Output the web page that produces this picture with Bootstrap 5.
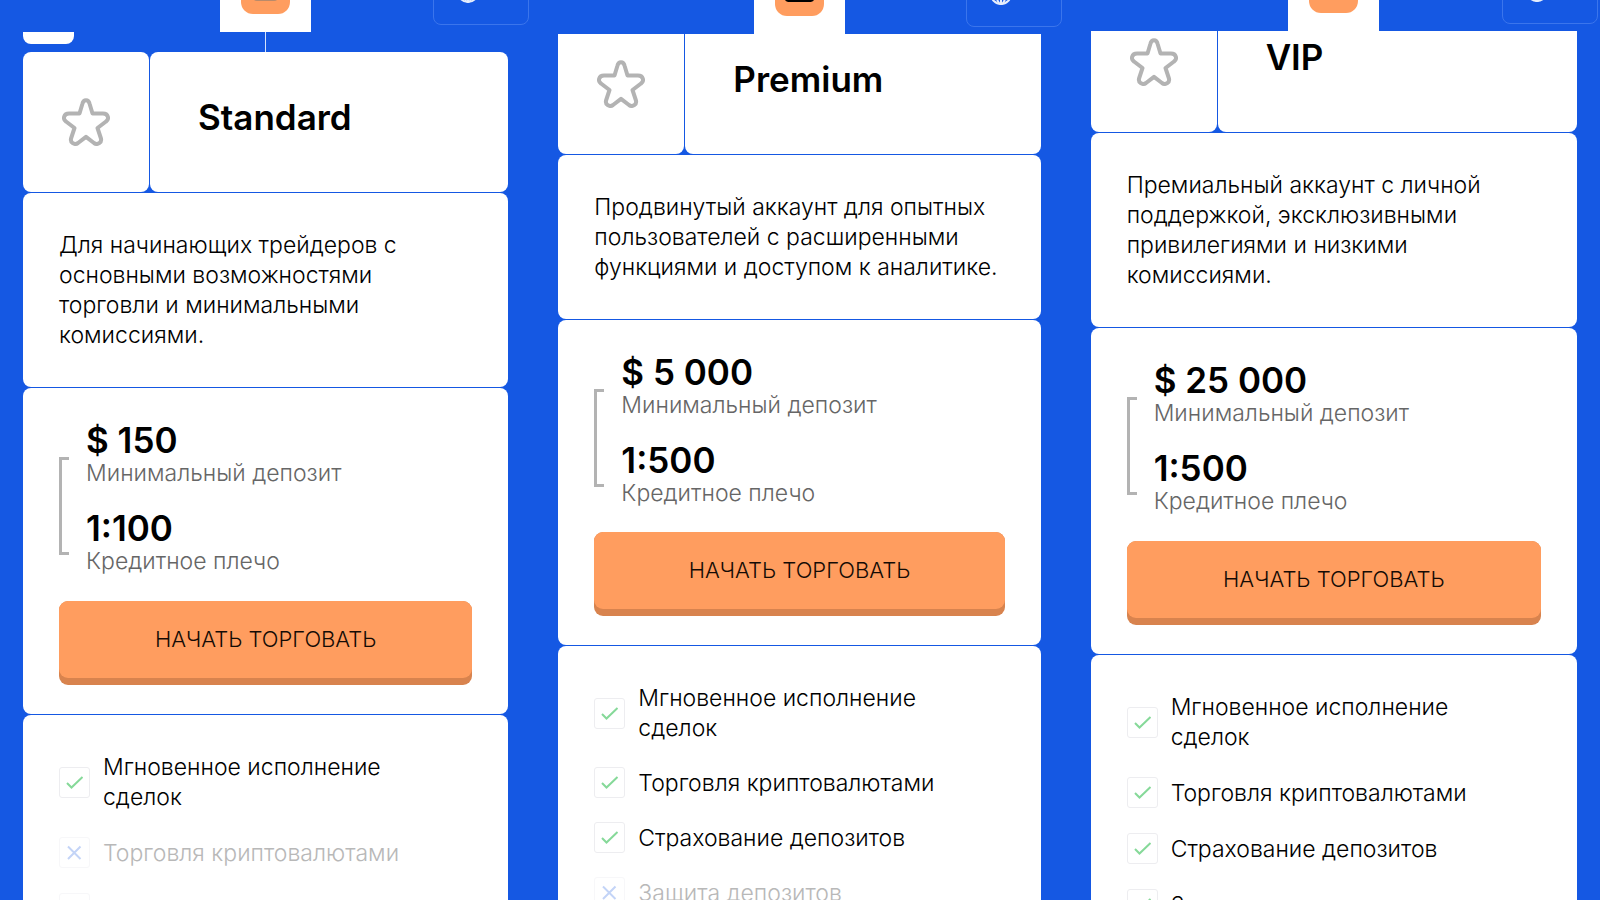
<!DOCTYPE html>
<html lang="ru">
<head>
<meta charset="utf-8">
<meta name="viewport" content="width=device-width, initial-scale=1">
<title>Типы счетов</title>
<link href="https://cdn.jsdelivr.net/npm/bootstrap@5.3.0/dist/css/bootstrap.min.css" rel="stylesheet">
<style>
  body { background: #1558e3; color: #000; font-family: Inter, "Noto Sans", sans-serif; font-size: 23px; font-weight: 350; line-height: 30px; }
  .plans { height: 100vh; overflow: hidden; }
  .plan-standard { --head: 32px; --scrolled: -40px; --gap: 25px; padding: 0 25px 0 23px; }
  .plan-premium { --head: 34px; --scrolled: -80px; --gap: 24px; padding: 0 26px 0 25px; }
  .plan-vip { --head: 31px; --scrolled: -99px; --gap: 25px; padding: 0 23px 0 24px; }
  .topbar { display: grid; grid-template-columns: 1fr auto 1fr; grid-template-rows: var(--head); align-items: end; height: var(--head); overflow: hidden; position: relative; z-index: 2; background: #1558e3; margin-right: -22px; padding-right: 22px; }
  .brand { grid-column: 2; width: 91px; height: 68px; padding-bottom: 18px; background: #fff; }
  .brand-mark { width: 49px; height: 49px; border-radius: 12px; background: #ff9d5f; }
  .brand-mark svg { display: block; }
  .lang { width: 96px; height: 64px; margin: 0 -21px 7px 0; padding: 0 0 21px 23px; border: 1px solid #3b75ec; border-radius: 8px; background: transparent; }
  .scroller { margin-top: var(--scrolled); }
  .strip { height: 60px; display: grid; grid-template-columns: 1fr 1px 1fr; }
  .strip-tab { width: 51px; height: 52px; background: #fff; border-radius: 8px; }
  .strip-line { background: #d5e2fb; }
  .tile { background: #fff; border-radius: 8px; }
  .stack { display: flex; flex-direction: column; gap: 1px; }
  .title-row { display: flex; gap: 1px; height: 140px; }
  .tile-star { width: 126px; }
  .tile-name { padding: 0 0 11px 48px; }
  .display-text { font-size: 35px; line-height: 36px; font-weight: 600; margin: 0; }
  .tile-about { padding: 37px 36px; }
  .tile-offer { padding: 34px 36px 29px; }
  .bracket { width: 10px; height: 98px; margin: 35px 17px 0 0; border: 3px solid #b3b3b3; border-right: 0; }
  .figures { display: flex; flex-direction: column; gap: 22px; }
  .caption { color: #666; }
  .cta { width: 100%; height: 84px; margin-top: var(--gap); padding: 0 0 7px; border: 0; border-radius: 9px; background: #d8834e; color: #140b05; font-size: 22px; font-weight: 350; overflow: hidden; }
  .cta-face { display: flex; align-items: center; justify-content: center; height: 100%; padding-bottom: 2px; border-radius: 0 0 9px 9px; background: #ff9d5f; }
  .tile-features { padding: 37px 36px 40px; }
  .features { display: flex; flex-direction: column; gap: var(--gap); margin: 0; padding: 0; list-style: none; }
  .features li { display: flex; align-items: center; gap: 13px; min-height: 31px; white-space: nowrap; }
  .features .off { color: #b8b8b8; }
  .tick-box { width: 31px; height: 31px; flex: none; border: 1px solid #ededf0; border-radius: 3px; }
  .off .tick-box { border-color: #f7f7f9; }
</style>
</head>
<body>
<svg width="0" height="0" class="position-absolute" aria-hidden="true">
  <symbol id="star" viewBox="0 0 48 48"><path d="M20.5 5.5C21.5 1 26.500 1 27.500 5.500L30.500 15.500H41C46.300 15.500 47.500 21 44 23.500L35.500 30L38.800 40C40.300 44.500 35.500 47.500 32 45L24 38.800L16 45C12.500 47.500 7.700 44.500 9.200 40L12.500 30L4 23.500C.5 21 1.700 15.500 7 15.500H17.500Z" fill="none" stroke="#b3b3b3" stroke-width="4" stroke-linejoin="round"/></symbol>
  <symbol id="yes" viewBox="0 0 29 29"><path d="M7 15L11.500 19.500L22.500 9" fill="none" stroke="#86d999" stroke-width="2"/></symbol>
  <symbol id="no" viewBox="0 0 29 29"><path d="M8 8.500L20.500 21M20.500 8.500L8 21" fill="none" stroke="#c3d4f7" stroke-width="2"/></symbol>
  <symbol id="globe" viewBox="0 0 22 22"><g fill="none" stroke="#e6eefc" stroke-width="2"><circle cx="11" cy="11" r="10"/><ellipse cx="11" cy="11" rx="4.500" ry="10"/><path d="M1 11H21M11 1V21"/></g></symbol>
</svg>
<main class="plans container-fluid p-0">
  <div class="row g-0">
    <section class="col-4 plan-standard">
      <header class="topbar">
        <div class="brand d-flex align-items-end justify-content-center"><div class="brand-mark"><svg width="49" height="49" viewBox="0 0 49 49"><path d="M12 10H37V32Q37 36 33 36H16Q12 36 12 32Z" fill="#b98a6a"/></svg></div></div>
        <button class="lang ms-auto d-flex align-items-end" aria-label="Язык"><svg width="22" height="22"><use href="#globe"/></svg></button>
      </header>
      <div class="scroller">
        <div class="strip"><div class="strip-tab"></div><div class="strip-line"></div></div>
        <div class="stack">
          <div class="title-row">
            <div class="tile tile-star d-flex align-items-center justify-content-center"><svg width="48" height="48"><use href="#star"/></svg></div>
            <div class="tile tile-name flex-fill d-flex align-items-center"><h2 class="display-text">Standard</h2></div>
          </div>
          <div class="tile tile-about">Для начинающих трейдеров с<br>основными возможностями<br>торговли и минимальными<br>комиссиями.</div>
          <div class="tile tile-offer">
            <div class="d-flex">
              <div class="bracket"></div>
              <div class="figures">
                <div><div class="display-text">$ 150</div><div class="caption">Минимальный депозит</div></div>
                <div><div class="display-text">1:100</div><div class="caption">Кредитное плечо</div></div>
              </div>
            </div>
            <button class="cta"><span class="cta-face">НАЧАТЬ ТОРГОВАТЬ</span></button>
          </div>
          <div class="tile tile-features">
            <ul class="features">
              <li><svg class="tick-box"><use href="#yes"/></svg><span>Мгновенное исполнение<br>сделок</span></li>
              <li class="off"><svg class="tick-box"><use href="#no"/></svg><span>Торговля криптовалютами</span></li>
              <li class="off"><svg class="tick-box"><use href="#no"/></svg><span>Страхование депозитов</span></li>
            </ul>
          </div>
        </div>
      </div>
    </section>
    <section class="col-4 plan-premium">
      <header class="topbar">
        <div class="brand d-flex align-items-end justify-content-center"><div class="brand-mark"><svg width="49" height="49" viewBox="0 0 49 49"><path d="M10 10H39V32Q39 35 34 35H15Q10 35 10 32Z" fill="#000"/></svg></div></div>
        <button class="lang ms-auto d-flex align-items-end" aria-label="Язык"><svg width="22" height="22"><use href="#globe"/></svg></button>
      </header>
      <div class="scroller">
        <div class="strip"><div class="strip-tab"></div><div class="strip-line"></div></div>
        <div class="stack">
          <div class="title-row">
            <div class="tile tile-star d-flex align-items-center justify-content-center"><svg width="48" height="48"><use href="#star"/></svg></div>
            <div class="tile tile-name flex-fill d-flex align-items-center"><h2 class="display-text">Premium</h2></div>
          </div>
          <div class="tile tile-about text-nowrap">Продвинутый аккаунт для опытных<br>пользователей с расширенными<br>функциями и доступом к аналитике.</div>
          <div class="tile tile-offer">
            <div class="d-flex">
              <div class="bracket"></div>
              <div class="figures">
                <div><div class="display-text">$ 5 000</div><div class="caption">Минимальный депозит</div></div>
                <div><div class="display-text">1:500</div><div class="caption">Кредитное плечо</div></div>
              </div>
            </div>
            <button class="cta"><span class="cta-face">НАЧАТЬ ТОРГОВАТЬ</span></button>
          </div>
          <div class="tile tile-features">
            <ul class="features">
              <li><svg class="tick-box"><use href="#yes"/></svg><span>Мгновенное исполнение<br>сделок</span></li>
              <li><svg class="tick-box"><use href="#yes"/></svg><span>Торговля криптовалютами</span></li>
              <li><svg class="tick-box"><use href="#yes"/></svg><span>Страхование депозитов</span></li>
              <li class="off"><svg class="tick-box"><use href="#no"/></svg><span>Защита депозитов</span></li>
            </ul>
          </div>
        </div>
      </div>
    </section>
    <section class="col-4 plan-vip">
      <header class="topbar">
        <div class="brand d-flex align-items-end justify-content-center"><div class="brand-mark"></div></div>
        <button class="lang ms-auto d-flex align-items-end" aria-label="Язык"><svg width="22" height="22"><use href="#globe"/></svg></button>
      </header>
      <div class="scroller">
        <div class="strip"><div class="strip-tab"></div><div class="strip-line"></div></div>
        <div class="stack">
          <div class="title-row">
            <div class="tile tile-star d-flex align-items-center justify-content-center"><svg width="48" height="48"><use href="#star"/></svg></div>
            <div class="tile tile-name flex-fill d-flex align-items-center"><h2 class="display-text">VIP</h2></div>
          </div>
          <div class="tile tile-about">Премиальный аккаунт с личной<br>поддержкой, эксклюзивными<br>привилегиями и низкими<br>комиссиями.</div>
          <div class="tile tile-offer">
            <div class="d-flex">
              <div class="bracket"></div>
              <div class="figures">
                <div><div class="display-text">$ 25 000</div><div class="caption">Минимальный депозит</div></div>
                <div><div class="display-text">1:500</div><div class="caption">Кредитное плечо</div></div>
              </div>
            </div>
            <button class="cta"><span class="cta-face">НАЧАТЬ ТОРГОВАТЬ</span></button>
          </div>
          <div class="tile tile-features">
            <ul class="features">
              <li><svg class="tick-box"><use href="#yes"/></svg><span>Мгновенное исполнение<br>сделок</span></li>
              <li><svg class="tick-box"><use href="#yes"/></svg><span>Торговля криптовалютами</span></li>
              <li><svg class="tick-box"><use href="#yes"/></svg><span>Страхование депозитов</span></li>
              <li><svg class="tick-box"><use href="#yes"/></svg><span>Защита депозитов</span></li>
            </ul>
          </div>
        </div>
      </div>
    </section>
  </div>
</main>
<script src="https://cdn.jsdelivr.net/npm/bootstrap@5.3.0/dist/js/bootstrap.bundle.min.js"></script>
</body>
</html>
